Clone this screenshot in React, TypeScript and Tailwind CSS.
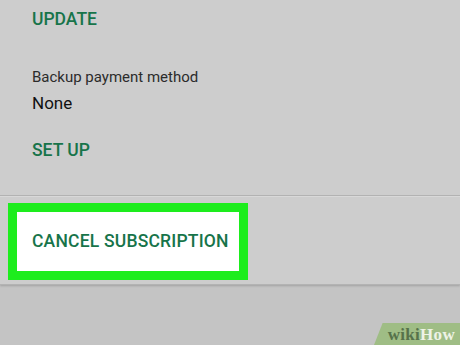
export default function App() {
  return (
    <div
      className="relative w-[460px] h-[345px] overflow-hidden bg-[#c4c4c4]"
      style={{ fontFamily: "Roboto, 'Liberation Sans', sans-serif" }}
    >
      {/* Settings card */}
      <div className="h-[285px] bg-[#cdcdcd] border-b border-[#b3b3b3] shadow-[0_1px_2px_rgba(0,0,0,0.18)] flex flex-col">
        <div className="pl-8 flex flex-col">
          <p className="mt-[11px] text-[17.5px] leading-[17.5px] font-medium text-[#17744a]">UPDATE</p>
          <p className="mt-[41px] text-[15px] leading-[15px] text-[#2b2b2b]">Backup payment method</p>
          <p className="mt-[10px] text-[17px] leading-[17px] text-[#111]">None</p>
          <p className="mt-[30px] text-[17.5px] leading-[17.5px] font-medium text-[#17744a]">SET UP</p>
        </div>

        <div className="mt-[36px] h-px bg-[#b2b2b2]" />
        <div className="h-px bg-[#d8d8d8]" />

        {/* Highlighted action */}
        <div className="mt-[6px] ml-2 w-[240px] h-[77px] border-[9px] border-[#1ded1d] bg-white flex items-center">
          <span className="pl-[15px] text-[17.5px] leading-[17.5px] font-medium tracking-[0.2px] text-[#17744a]">
            CANCEL SUBSCRIPTION
          </span>
        </div>
      </div>

      {/* watermark */}
      <div className="absolute right-0 bottom-0 w-[86px] h-[22px] bg-[#9fbd85] [clip-path:polygon(10%_0,100%_0,100%_100%,0_100%)] flex items-center justify-end pr-[5px]">
        <span
          className="text-[17px] leading-[17px] font-bold tracking-[0.3px]"
          style={{ fontFamily: "'Liberation Serif', serif" }}
        >
          <span className="text-[#56724a]">wiki</span>
          <span className="text-[#eef3e6]">How</span>
        </span>
      </div>
    </div>
  );
}
